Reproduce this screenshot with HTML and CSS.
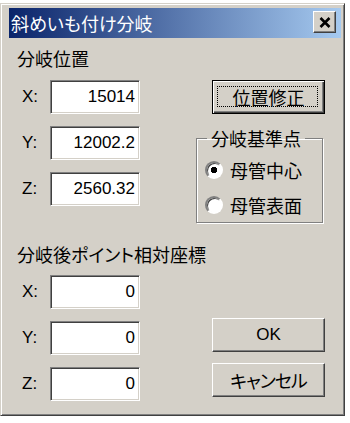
FILE: index.html
```html
<!DOCTYPE html>
<html lang="ja">
<head>
    <meta charset="UTF-8">
    <title>斜めいも付け分岐</title>
    <link rel="stylesheet" href="styles.css">
</head>
<body>
    <div class="window">
        <!-- Title bar -->
        <div class="titlebar">
            <span class="title">斜めいも付け分岐</span>
            <button class="close-btn">
                <svg width="12" height="11" viewBox="0 0 12 11">
                    <path d="M1.5 1 L10.5 10 M10.5 1 L1.5 10" stroke="#000" stroke-width="2.6" fill="none"/>
                </svg>
            </button>
        </div>

        <div class="dialog">
            <!-- Left column -->
            <div class="col-left">
                <div class="section-title">分岐位置</div>
                <div class="fields">
                    <div class="field"><label>X:</label><input type="text" value="15014"></div>
                    <div class="field"><label>Y:</label><input type="text" value="12002.2"></div>
                    <div class="field"><label>Z:</label><input type="text" value="2560.32"></div>
                </div>

                <div class="section-title second">分岐後ポイント相対座標</div>
                <div class="fields lower">
                    <div class="field"><label>X:</label><input type="text" value="0"></div>
                    <div class="field"><label>Y:</label><input type="text" value="0"></div>
                    <div class="field"><label>Z:</label><input type="text" value="0"></div>
                </div>
            </div>

            <!-- Right column -->
            <div class="col-right">
                <button class="btn default">位置修正</button>
                <fieldset class="group">
                    <legend>分岐基準点</legend>
                    <label class="radio"><span class="radio-dot checked"></span>母管中心</label>
                    <label class="radio"><span class="radio-dot"></span>母管表面</label>
                </fieldset>
                <button class="btn ok">OK</button>
                <button class="btn cancel">キャンセル</button>
            </div>
        </div>
    </div>
</body>
</html>
```

FILE: styles.css
```css
body {
    margin: 0;
    background-color: white;
    color: black;
    font-family: "Noto Sans CJK JP", sans-serif;
    font-size: 18px;
    font-feature-settings: "palt";
}

/* Window frame */
.window {
    box-sizing: border-box;
    width: 345px;
    height: 413px;
    margin-top: 3px;
    padding: 4px 3px 0 8px;
    background-color: #d4d0c8;
    border: 1px solid;
    border-color: #d4d0c8 #404040 #404040 #d4d0c8;
    box-shadow: inset 1px 1px #fff, inset -1px -1px #808080;
}

/* Title bar */
.titlebar {
    height: 30px;
    display: flex;
    align-items: center;
    justify-content: space-between;
    padding: 0 5px 0 2px;
    background: linear-gradient(to right, #0a246a, #a6caf0);
    color: white;
}

.title {
    font-size: 18px;
    line-height: 20px;
}

.close-btn {
    box-sizing: border-box;
    width: 23px;
    height: 22px;
    margin-top: -2px;
    padding: 0;
    display: flex;
    align-items: center;
    justify-content: center;
    background-color: #d4d0c8;
    border: 1px solid;
    border-color: #fff #404040 #404040 #fff;
    box-shadow: inset -1px -1px #808080;
}

/* Dialog body */
.dialog {
    display: flex;
    padding: 10px 0 0 8px;
}

.col-left {
    width: 123px;
}

.col-right {
    width: 129px;
    margin-left: 56px;
    display: flex;
    flex-direction: column;
}

.section-title {
    height: 20px;
    line-height: 20px;
    white-space: nowrap;
}

.section-title.second {
    margin-top: 38px;
}

.fields {
    margin-top: 12px;
    display: flex;
    flex-direction: column;
    gap: 12px;
}

.fields.lower {
    margin-top: 11px;
}

.field {
    display: flex;
    align-items: center;
    height: 34px;
}

.field label {
    width: 28px;
    padding-left: 5px;
    font-family: "Liberation Sans", sans-serif;
    font-size: 17px;
}

.field input {
    box-sizing: border-box;
    width: 90px;
    height: 34px;
    margin: 0;
    padding: 0 4px 0 0;
    text-align: right;
    font-family: "Liberation Sans", sans-serif;
    font-size: 17px;
    color: black;
    background: white;
    border: 1px solid;
    border-color: #808080 #fff #fff #808080;
    box-shadow: inset 1px 1px #404040, inset -1px -1px #d4d0c8;
    outline: none;
}

/* Buttons */
.btn {
    box-sizing: border-box;
    width: 113px;
    height: 34px;
    margin-left: 16px;
    padding: 0;
    font-family: "Noto Sans CJK JP", sans-serif;
    font-size: 18px;
    font-feature-settings: "palt";
    color: black;
    background-color: #d4d0c8;
    border: 1px solid;
    border-color: #fff #404040 #404040 #fff;
    box-shadow: inset -1px -1px #808080, inset 1px 1px #d4d0c8;
}

.btn.default {
    position: relative;
    margin-top: 32px;
    border: 1px solid #000;
    box-shadow: inset 1px 1px #fff, inset -1px -1px #404040, inset -2px -2px #808080;
}

.btn.default::after {
    content: "";
    position: absolute;
    top: 5px;
    left: 4px;
    right: 6px;
    bottom: 6px;
    border: 1px dotted #000;
}

.btn.ok {
    margin-top: 95px;
    font-family: "Liberation Sans", sans-serif;
    font-size: 17px;
}

.btn.cancel {
    margin-top: 11px;
    letter-spacing: -1px;
}

/* Group box */
.group {
    box-sizing: border-box;
    width: 127px;
    margin: 14px 0 0 0;
    padding: 12px 0 7px 10px;
    border: 1px solid #808080;
    box-shadow: inset 1px 1px #fff, 1px 1px #fff;
    display: flex;
    flex-direction: column;
    gap: 15px;
}

.group legend {
    padding: 0 4px;
    line-height: 20px;
}

.radio {
    display: flex;
    align-items: center;
    gap: 7px;
    height: 20px;
    margin-left: -2px;
}

.radio-dot {
    box-sizing: border-box;
    width: 18px;
    height: 18px;
    border-radius: 50%;
    background: white;
    border: 2px solid;
    border-color: #808080 #fff #fff #808080;
    box-shadow: inset 1px 1px #404040;
}

.radio-dot.checked {
    background: radial-gradient(circle, #000 0, #000 3px, #fff 3.5px);
}
```
